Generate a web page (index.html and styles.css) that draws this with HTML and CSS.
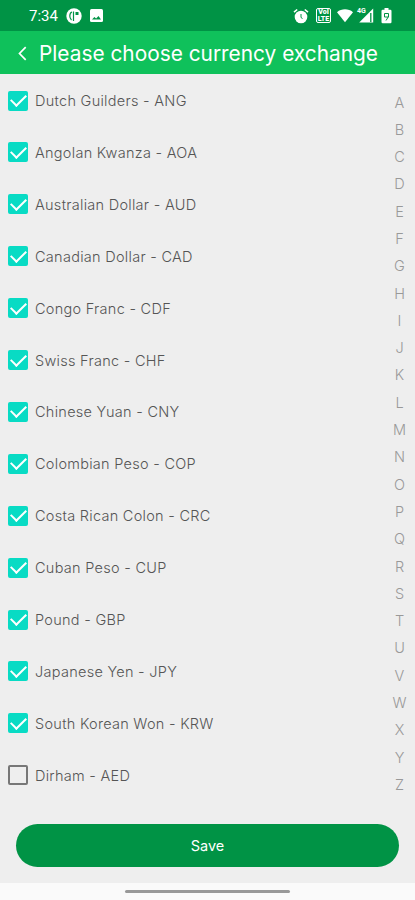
FILE: index.html
```
<!DOCTYPE html>
<html lang="en">
<head>
  <meta charset="UTF-8" />
  <title>Choose currency</title>
  <meta name="viewport" content="width=device-width, initial-scale=1.0" />
  <link rel="stylesheet" href="styles.css">
</head>
<body>

<div class="status-bar">
  <span class="time">7:34</span>
  <svg class="app-icon" width="16" height="16" viewBox="0 0 16 16">
    <circle cx="8" cy="8" r="7.7" fill="#fff"/>
    <path d="M7.500 3.500v9.500M6 4C4.200 4.600 3.800 6 3.800 8s.6 3 1.700 4" fill="none" stroke="#009345" stroke-width="1.200"/>
    <path d="M9.500 4h3v3h-3z" fill="#009345"/>
  </svg>
  <svg class="image-icon" width="13" height="13" viewBox="0 0 13 13">
    <rect width="13" height="13" rx="1.5" fill="#fff"/>
    <path d="M2 10.500l2.400-2.500 1.700 1.500 2.400-2.500 2.500 3.500z" fill="#009345"/>
  </svg>
  <div class="status-right">
    <svg width="16" height="16" viewBox="0 0 16 16">
      <circle cx="8" cy="9" r="6.300" fill="#fff"/>
      <path d="M1 4.200L4.200 1.500M15 4.200l-3.200-2.700" stroke="#fff" stroke-width="1.600"/>
      <path d="M8 6v3.500l1.500 1" fill="none" stroke="#009345" stroke-width="1"/>
    </svg>
    <span class="lte"><span>VoI</span><span>LTE</span></span>
    <svg class="wifi" width="16" height="14" viewBox="0 0 16 14">
      <path d="M0 3.200C4.500-.6 11.500-.6 16 3.200L8 13.300z" fill="#fff"/>
    </svg>
    <span class="signal">
      <svg width="16" height="15" viewBox="0 0 16 15">
        <path d="M15.200.5v14H1.200z" fill="#fff"/>
        <path d="M12.800 5v9" stroke="#009345" stroke-width="1.300"/>
      </svg>
      <span>4G</span>
    </span>
    <svg class="battery" width="11" height="16" viewBox="0 0 11 16">
      <path d="M3.500 0h4v1.800h1.800q1.200 0 1.200 1.200v11q0 1.200-1.200 1.200H1.700Q.5 15.200.5 14V3q0-1.200 1.200-1.200h1.800z" fill="#fff"/>
      <path d="M3.500 5.500h4V9h-4zM7.500 8.500L5 12.500" fill="none" stroke="#009345" stroke-width="1"/>
    </svg>
  </div>
</div>

<header class="app-bar">
  <svg class="back" width="9" height="15" viewBox="0 0 9 15">
    <path d="M7.700 1.200L1.500 7.500l6.200 6.300" fill="none" stroke="#fff" stroke-width="1.700"/>
  </svg>
  <h1>Please choose currency exchange</h1>
</header>

<main class="content">
  <ul class="currencies" id="currencies"></ul>
  <ul class="letters" id="letters"></ul>
</main>

<div class="footer">
  <button class="save">Save</button>
</div>
<div class="nav-bar"><div class="handle"></div></div>

<script>
  const currencies = [
    "Dutch Guilders - ANG",
    "Angolan Kwanza - AOA",
    "Australian Dollar - AUD",
    "Canadian Dollar - CAD",
    "Congo Franc - CDF",
    "Swiss Franc - CHF",
    "Chinese Yuan - CNY",
    "Colombian Peso - COP",
    "Costa Rican Colon - CRC",
    "Cuban Peso - CUP",
    "Pound - GBP",
    "Japanese Yen - JPY",
    "South Korean Won - KRW",
    "Dirham - AED",
  ];

  // everything but the last one is selected
  document.getElementById("currencies").innerHTML = currencies.map((name, i) => `
    <li><label>
      <input type="checkbox" ${i < currencies.length - 1 ? "checked" : ""}>
      <span class="name">${name}</span>
    </label></li>`).join("");

  document.getElementById("letters").innerHTML =
    [..."ABCDEFGHIJKLMNOPQRSTUVWXYZ"].map(l => `<li>${l}</li>`).join("");
</script>

</body>
</html>
```
FILE: styles.css
```
* { margin: 0; padding: 0; box-sizing: border-box; }

body {
  height: 900px;
  display: flex;
  flex-direction: column;
  overflow: hidden;
  background: #eee;
  color: #555;
  font-family: Inter, "Liberation Sans", sans-serif;
}

ul { list-style: none; }

svg { display: block; }

.status-bar {
  height: 31px;
  padding: 0 23px 0 29px;
  display: flex;
  align-items: center;
  background: #009345;
  color: #fff;
}

.time {
  width: 37px;
  font-family: Roboto, sans-serif;
  font-size: 15px;
}

.image-icon { margin-left: 8px; }

.status-right {
  margin-left: auto;
  display: flex;
  align-items: center;
}

.lte {
  width: 15px;
  height: 15px;
  margin-left: 7px;
  border: 1px solid #fff;
  border-radius: 2px;
  display: flex;
  flex-direction: column;
  align-items: center;
  font: 900 7px/6.5px Roboto, sans-serif;
}

.wifi { margin-left: 6px; }

.signal {
  position: relative;
  margin-left: 5px;
}

.signal span {
  position: absolute;
  left: -1px;
  top: 0;
  font: bold 7px/7px Roboto, sans-serif;
}

.battery { margin-left: 7px; }

.app-bar {
  height: 43px;
  padding: 1px 0 0 18px;
  display: flex;
  align-items: center;
  background: #0fc15b;
  color: #fff;
}

.app-bar h1 {
  margin-left: 12px;
  font-size: 20.85px;
  font-weight: 400;
  white-space: nowrap;
}

.content {
  height: 742px;
  padding-top: 1px;
  display: flex;
  justify-content: space-between;
}

.currencies li {
  height: 51.92px;
}

.currencies label {
  height: 51px;
  padding-left: 8px;
  display: flex;
  align-items: center;
}

.currencies input {
  appearance: none;
  width: 20px;
  height: 20px;
  border: 2px solid #777;
  border-radius: 2px;
  display: grid;
  place-items: center;
}

.currencies input:checked {
  border-color: #08dbc4;
  background: #08dbc4;
}

.currencies input:checked::after {
  content: "";
  width: 14px;
  height: 7px;
  margin-top: -4px;
  border: solid #fff;
  border-width: 0 0 2px 2px;
  transform: rotate(-45deg);
}

.name {
  margin-left: 7px;
  font-size: 14.5px;
  font-weight: 300;
  letter-spacing: 0.28px;
  white-space: nowrap;
}

.letters {
  width: 31px;
  padding-top: 13.5px;
  color: #999;
  font-size: 14.5px;
  font-weight: 300;
  text-align: center;
}

.letters li {
  height: 27.3px;
  line-height: 27.3px;
}

.footer {
  height: 67px;
  padding: 8px 16px 16px;
}

.save {
  width: 100%;
  height: 43px;
  border: none;
  border-radius: 22px;
  background: #009345;
  color: #fff;
  font-family: inherit;
  font-size: 14.5px;
}

.nav-bar {
  height: 17px;
  padding-top: 7px;
  background: #fafafa;
}

.handle {
  width: 165px;
  height: 3px;
  margin: 0 auto;
  border-radius: 2px;
  background: #999;
}

.currencies input:checked::after {
  width: 13px;
  height: 7px;
}
```
